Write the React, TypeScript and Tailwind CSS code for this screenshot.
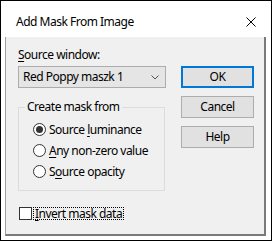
import React from "react";

const font = { fontFamily: '"Noto Sans", "Open Sans", Arial, sans-serif' };

function Radio({ checked, children }: { checked?: boolean; children: React.ReactNode }) {
  return (
    <div className="flex h-[21px] items-center">
      <div className="flex h-[13px] w-[13px] items-center justify-center rounded-full border border-[#333333] bg-white">
        {checked && <div className="h-[7px] w-[7px] rounded-full bg-[#333333]" />}
      </div>
      <span className="ml-[3px] leading-[16px]">{children}</span>
    </div>
  );
}

function Btn({ children, primary }: { children: React.ReactNode; primary?: boolean }) {
  return (
    <div
      className={
        "flex h-[22px] w-[73px] items-center justify-center bg-[#e1e1e1] leading-[16px] " +
        (primary ? "border-2 border-[#0078d7]" : "border border-[#adadad]")
      }
    >
      {children}
    </div>
  );
}

export default function App() {
  return (
    <div
      className="flex h-[241px] w-[272px] flex-col border border-black bg-white text-[12px] tracking-[-0.5px] text-black"
      style={font}
    >
      {/* title bar */}
      <div className="flex h-[36px] shrink-0 items-center justify-between pl-[15px] pr-[15px] pt-[5px]">
        <span className="leading-[16px]">Add Mask From Image</span>
        <svg width="10" height="10" viewBox="0 0 10 10" className="block">
          <path d="M0.5 0.5 L9.5 9.5 M9.5 0.5 L0.5 9.5" stroke="#000" strokeWidth="1" fill="none" />
        </svg>
      </div>
      {/* client */}
      <div className="ml-[4px] mr-[5px] mb-[4px] flex h-[199px] border-l border-r-2 border-b-2 border-l-[#a0a0a0] border-r-[#7a7a7a] border-b-[#7a7a7a] bg-[#f0f0f0] pl-[12px] pt-[10px]">
        <div className="flex w-[148px] flex-col">
          <div className="h-[16px] leading-[16px]">
            <span className="underline underline-offset-[2px]">S</span>ource window:
          </div>
          <div className="mt-[3px] flex h-[22px] items-center justify-between border border-[#acacac] bg-[#e5e5e5] pl-[4px] pr-[6px]">
            <span className="leading-[16px]">Red Poppy maszk 1</span>
            <svg width="8" height="5" viewBox="0 0 8 5" className="block">
              <path d="M0.5 0.5 L4 4 L7.5 0.5" stroke="#555" strokeWidth="1" fill="none" />
            </svg>
          </div>
          <div className="relative mt-[19px] h-[84px] w-[147px] border border-[#dcdcdc] pl-[14px] pt-[11px]">
            <span className="absolute -top-[9px] left-[6px] bg-[#f0f0f0] px-[2px] leading-[16px]">
              Create mask from
            </span>
            <Radio checked>
              Source <span className="underline underline-offset-[2px]">l</span>uminance
            </Radio>
            <Radio>
              <span className="underline underline-offset-[2px]">A</span>ny non-zero value
            </Radio>
            <Radio>
              S<span className="underline underline-offset-[2px]">o</span>urce opacity
            </Radio>
          </div>
          <div className="mt-[16px] flex h-[13px] items-center pl-[1px]">
            <div className="h-[13px] w-[13px] border border-[#333333] bg-white" />
            <div className="ml-[1px] flex h-[13px] items-center border border-dotted border-black px-[1px]">
              <span className="leading-[13px]">
                <span className="underline underline-offset-[2px]">I</span>nvert mask data
              </span>
            </div>
          </div>
        </div>
        <div className="ml-[15px] mt-[19px] flex flex-col gap-[8px]">
          <Btn primary>OK</Btn>
          <Btn>Cancel</Btn>
          <Btn>Help</Btn>
        </div>
      </div>
    </div>
  );
}
